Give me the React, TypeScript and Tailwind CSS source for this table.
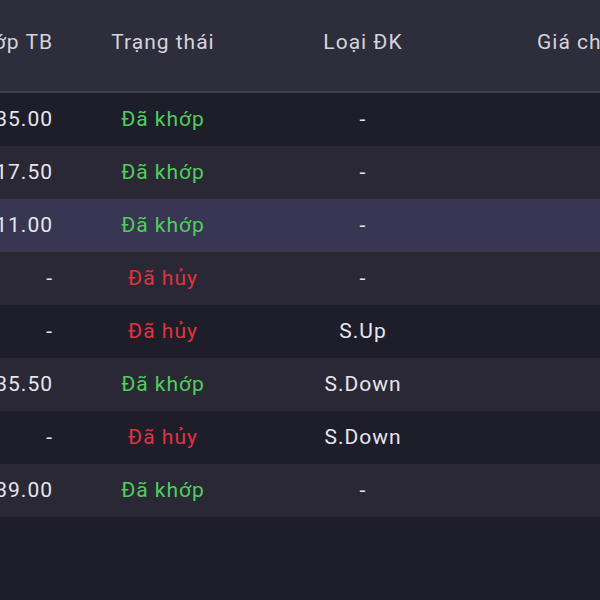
import React from "react";

type Row = { price: string; status: "ok" | "cancel"; type: string; bg: string };

const rows: Row[] = [
  { price: "835.00", status: "ok", type: "-", bg: "bg-[#1e1d2a]" },
  { price: "817.50", status: "ok", type: "-", bg: "bg-[#292834]" },
  { price: "811.00", status: "ok", type: "-", bg: "bg-[#383650]" },
  { price: "-", status: "cancel", type: "-", bg: "bg-[#292834]" },
  { price: "-", status: "cancel", type: "S.Up", bg: "bg-[#1e1d2a]" },
  { price: "835.50", status: "ok", type: "S.Down", bg: "bg-[#292834]" },
  { price: "-", status: "cancel", type: "S.Down", bg: "bg-[#1e1d2a]" },
  { price: "839.00", status: "ok", type: "-", bg: "bg-[#292834]" },
];

export default function App() {
  return (
    <div
      className="w-[600px] h-[600px] overflow-hidden bg-[#1e1d2a] text-[21px] tracking-[1px] text-[#e6e6ee]"
      style={{ fontFamily: "Roboto, 'Noto Sans', sans-serif" }}
    >
      <div className="flex h-[91px] pb-[6px] bg-[#2e2d3b] items-center text-[#d4d4dc]">
        <div className="w-[63px] shrink-0 flex justify-end pr-[10px] overflow-hidden whitespace-nowrap">
          <span>Giá khớp TB</span>
        </div>
        <div className="w-[200px] shrink-0 text-center whitespace-nowrap">Trạng thái</div>
        <div className="w-[200px] shrink-0 text-center whitespace-nowrap">Loại ĐK</div>
        <div className="w-[200px] shrink-0 pl-[74px] whitespace-nowrap">Giá chốt</div>
      </div>
      <div className="h-[2px] bg-[#403f4d]" />
      {rows.map((r, i) => (
        <div key={i} className={`flex h-[53px] items-center ${r.bg}`}>
          <div className="w-[63px] shrink-0 flex justify-end pr-[10px] overflow-hidden whitespace-nowrap">
            <span>{r.price}</span>
          </div>
          <div
            className={`w-[200px] shrink-0 text-center whitespace-nowrap ${
              r.status === "ok" ? "text-[#4ecf5c]" : "text-[#e0333f]"
            }`}
          >
            {r.status === "ok" ? "Đã khớp" : "Đã hủy"}
          </div>
          <div className="w-[200px] shrink-0 text-center whitespace-nowrap">{r.type}</div>
          <div className="w-[200px] shrink-0" />
        </div>
      ))}
    </div>
  );
}
